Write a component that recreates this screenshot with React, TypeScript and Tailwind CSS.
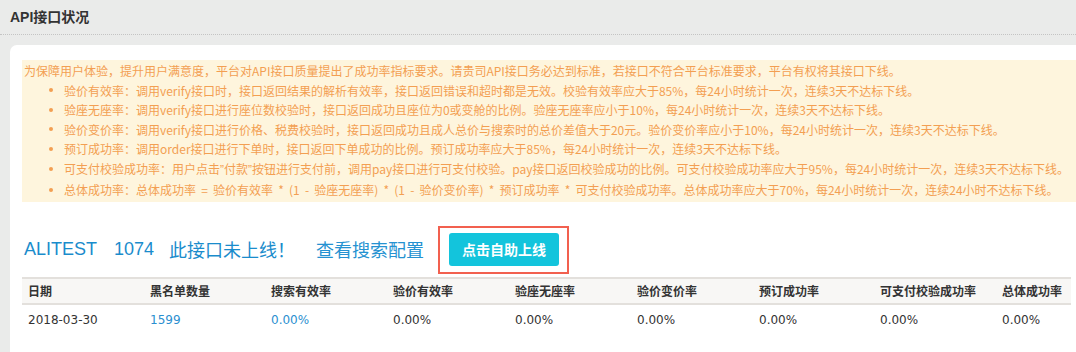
import React from "react";

const cjk = '"Noto Sans CJK SC", sans-serif';
const dv = '"DejaVu Sans", "Noto Sans CJK SC", sans-serif';
const arial = '"Liberation Sans", "Noto Sans CJK SC", sans-serif';

const Q = ({ c }: { c: string }) => <span style={{ fontFamily: arial }}>{c}</span>;

const items: React.ReactNode[] = [
  "验价有效率：调用verify接口时，接口返回结果的解析有效率，接口返回错误和超时都是无效。校验有效率应大于85%，每24小时统计一次，连续3天不达标下线。",
  "验座无座率：调用verify接口进行座位数校验时，接口返回成功且座位为0或变舱的比例。验座无座率应小于10%，每24小时统计一次，连续3天不达标下线。",
  "验价变价率：调用verify接口进行价格、税费校验时，接口返回成功且成人总价与搜索时的总价差值大于20元。验价变价率应小于10%，每24小时统计一次，连续3天不达标下线。",
  "预订成功率：调用order接口进行下单时，接口返回下单成功的比例。预订成功率应大于85%，每24小时统计一次，连续3天不达标下线。",
  <>
    可支付校验成功率：用户点击<Q c="”" />付款<Q c="”" />按钮进行支付前，调用pay接口进行可支付校验。pay接口返回校验成功的比例。可支付校验成功率应大于95%，每24小时统计一次，连续3天不达标下线。
  </>,
  <span className="[word-spacing:2.5px]">
    总体成功率：总体成功率 = 验价有效率 * (1 - 验座无座率) * (1 - 验价变价率) * 预订成功率 * 可支付校验成功率。总体成功率应大于70%，每24小时统计一次，连续24小时不达标下线。
  </span>,
];

const headers = ["日期", "黑名单数量", "搜索有效率", "验价有效率", "验座无座率", "验价变价率", "预订成功率", "可支付校验成功率", "总体成功率"];
const row: { v: string; blue?: boolean }[] = [
  { v: "2018-03-30" },
  { v: "1599", blue: true },
  { v: "0.00%", blue: true },
  { v: "0.00%" },
  { v: "0.00%" },
  { v: "0.00%" },
  { v: "0.00%" },
  { v: "0.00%" },
  { v: "0.00%" },
];

const gridCols = "grid grid-cols-[122px_121px_122px_122px_122px_122px_121px_122px_1fr]";

export default function App() {
  return (
    <div className="w-[1076px] h-[352px] overflow-hidden bg-[#eaebea]" style={{ fontFamily: cjk }}>
      <div className="h-[35px] border-b border-dotted border-[#c4c4c4] pl-[10px] flex items-center">
        <span className="text-[14px] font-bold text-[#333]" style={{ fontFamily: arial }}>
          API接口状况
        </span>
      </div>
      <div className="ml-[10px] mt-[10px] h-[400px] bg-white rounded-tl-[7px] pt-[15px] pl-[12px]">
        <div className="bg-[#fef5dd] text-[#f39f52] text-[12px] leading-[19.5px] pt-[1px] pb-[2px] pl-[2px]">
          <div className="whitespace-nowrap">
            为保障用户体验，提升用户满意度，平台对API接口质量提出了成功率指标要求。请贵司API接口务必达到标准，若接口不符合平台标准要求，平台有权将其接口下线。
          </div>
          {items.map((t, i) => (
            <div key={i} className="flex items-center whitespace-nowrap">
              <span className="ml-[25px] w-[4px] h-[4px] rounded-full bg-[#f39f52] shrink-0" />
              <span className="ml-[11px]">{t}</span>
            </div>
          ))}
        </div>

        <div className="flex items-center mt-[24px] h-[48px] text-[18px] text-[#1a8ccc]">
          <span className="ml-[2px]" style={{ fontFamily: arial }}>ALITEST</span>
          <span className="ml-[17px]" style={{ fontFamily: arial }}>1074</span>
          <span className="ml-[15px]" style={{ fontFamily: cjk }}>此接口未上线！</span>
          <span className="ml-[21px] text-[#2592d1]" style={{ fontFamily: cjk }}>查看搜索配置</span>
          <div className="ml-[14px] border-2 border-[#f2604f] pt-[5px] pb-[6px] pl-[9px] pr-[8px]">
            <div className="w-[110px] h-[33px] rounded-[3px] bg-[#13c4dc] text-white text-[14px] font-bold flex items-center justify-center">
              点击自助上线
            </div>
          </div>
        </div>

        <div className="w-[1049px] mt-[3px]">
          <div className={`${gridCols} h-[28px] bg-[#f8f7f5] border-t-2 border-b-2 border-[#e3e0dc] items-center`}>
            {headers.map((h) => (
              <div key={h} className="pl-[6px] text-[12px] font-bold text-[#333] whitespace-nowrap">
                {h}
              </div>
            ))}
          </div>
          <div className={`${gridCols} h-[30px] items-center`}>
            {row.map((c, i) => (
              <div
                key={i}
                className={`pl-[6px] text-[12px] whitespace-nowrap ${c.blue ? "text-[#2b8fd0]" : "text-[#333]"}`}
                style={{ fontFamily: dv }}
              >
                {c.v}
              </div>
            ))}
          </div>
        </div>
      </div>
    </div>
  );
}
